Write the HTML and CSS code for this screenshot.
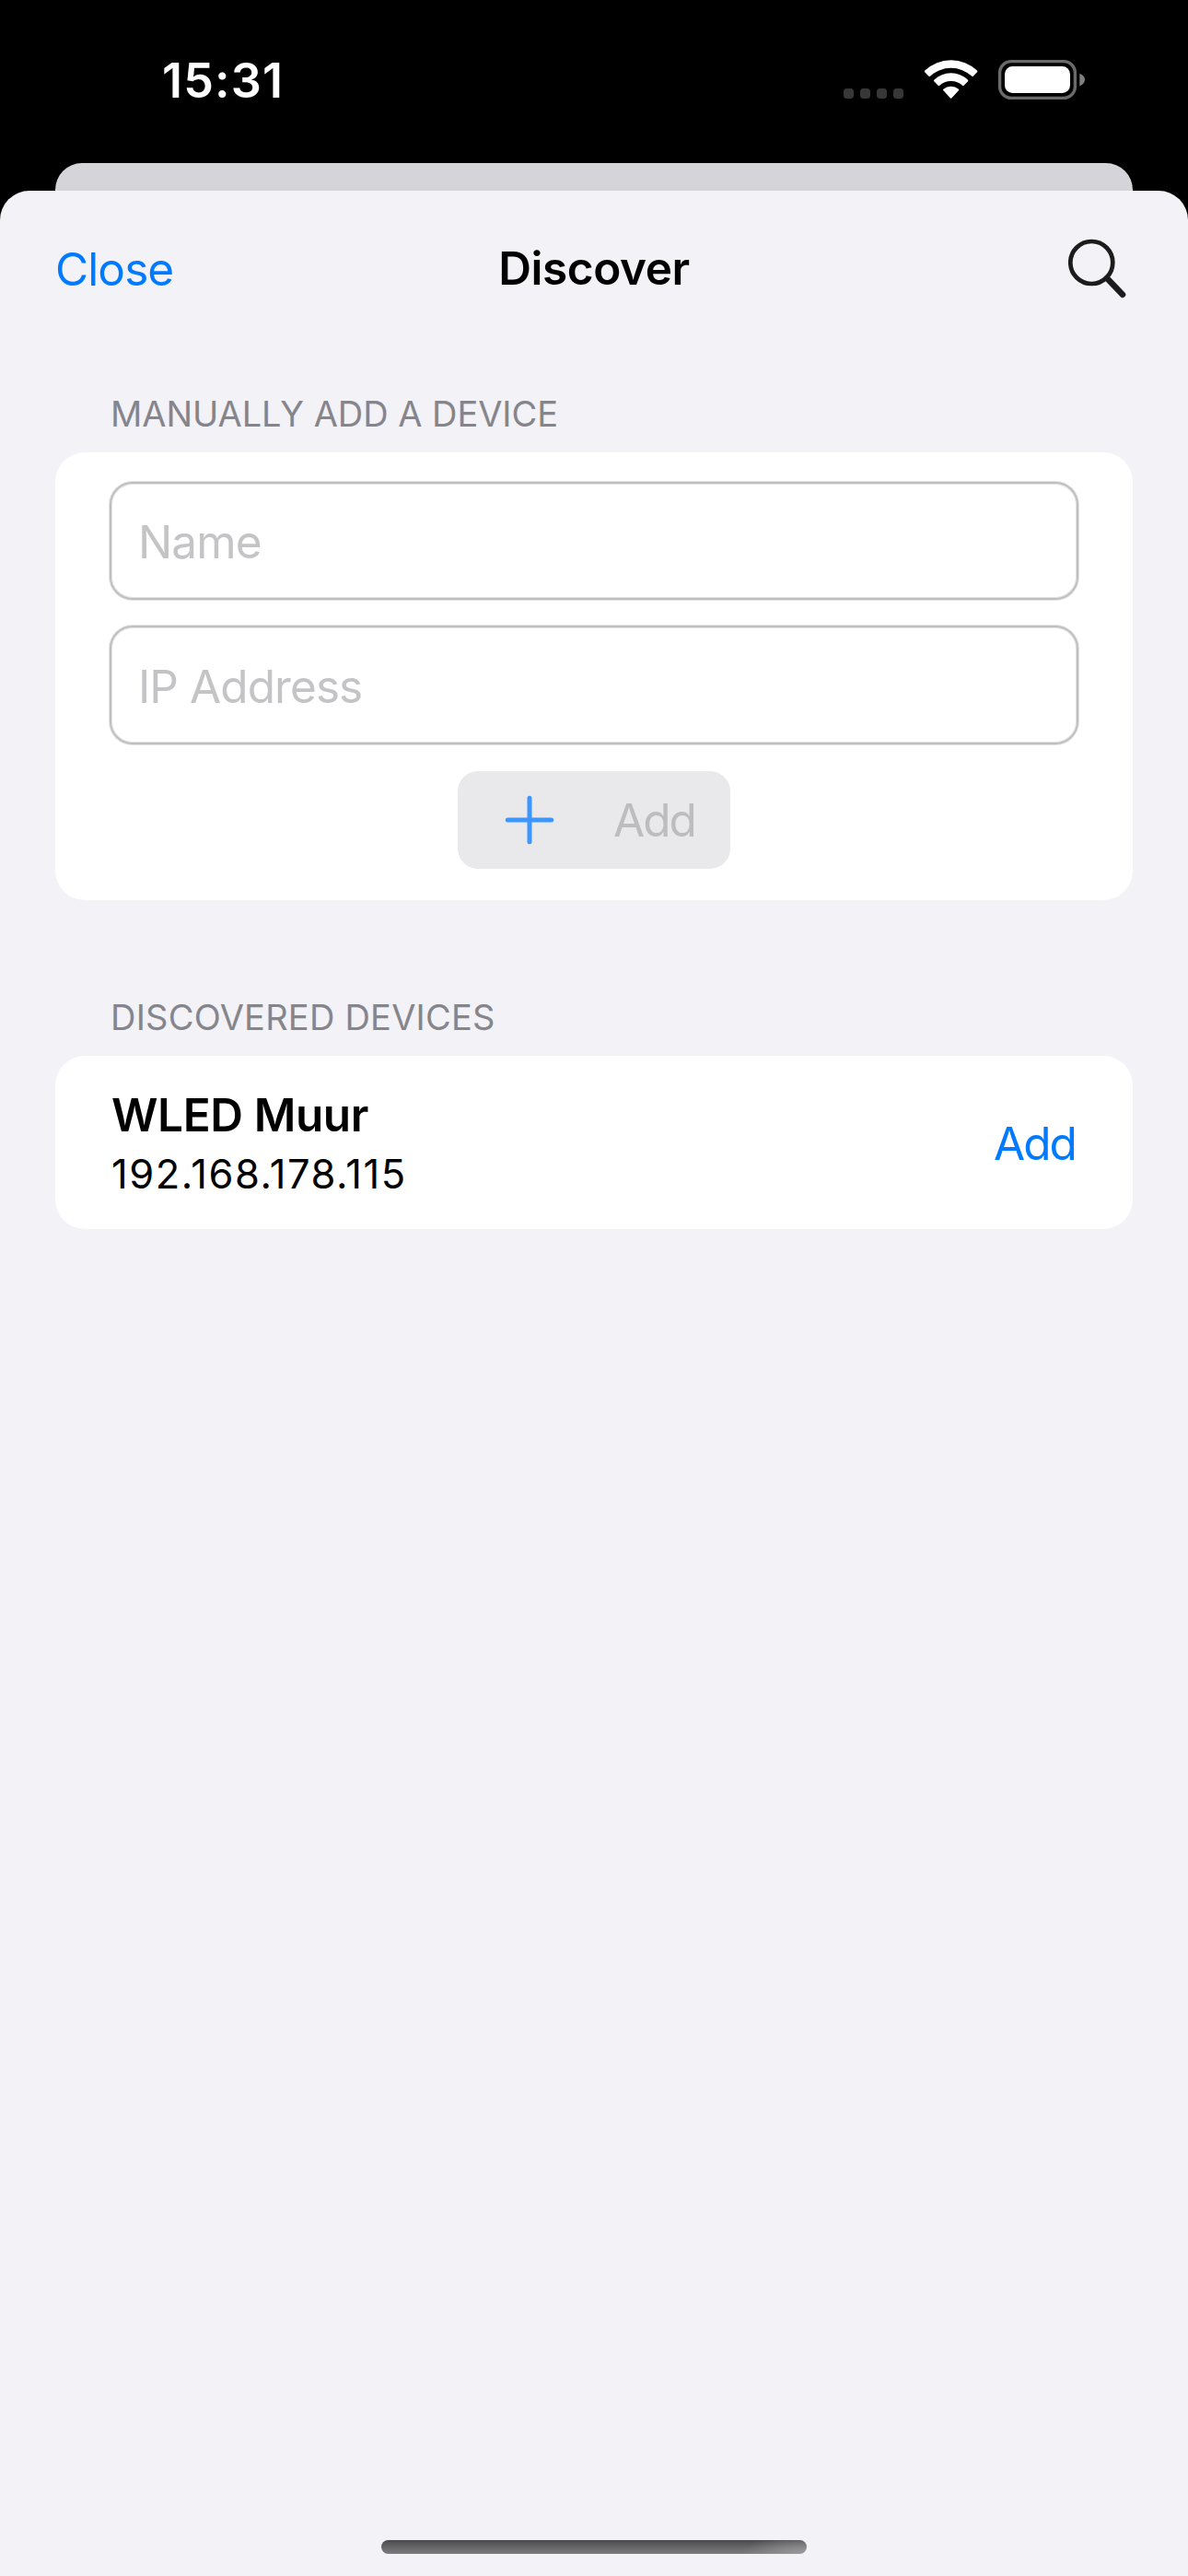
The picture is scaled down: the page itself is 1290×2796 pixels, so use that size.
FILE: index.html
```html
<!DOCTYPE html>
<html lang="en">
<head>
<meta charset="utf-8">
<title>Discover</title>
<link rel="stylesheet" href="styles.css">
</head>
<body>
<header class="status">
  <time class="clock">15:31</time>
  <svg class="indicators" width="264" height="46" viewBox="0 0 264 46" aria-hidden="true">
    <g fill="#373737"><rect x="0" y="32" width="11" height="11" rx="3.5"/><rect x="18" y="32" width="11" height="11" rx="3.5"/><rect x="36" y="32" width="11" height="11" rx="3.5"/><rect x="54" y="32" width="11" height="11" rx="3.5"/></g>
    <g fill="#fff">
      <path d="M88.200 14.300Q87.500 13.500 88.300 12.600A41 41 0 0 1 145 12.600Q145.800 13.500 145.100 14.300L140.500 18.900Q140 19.300 139.400 18.800A33.300 33.300 0 0 0 93.900 18.800Q93.300 19.300 92.800 18.900Z"/>
      <path d="M98.200 24.200Q97.500 23.500 98.300 22.700A26.500 26.500 0 0 1 135 22.700Q135.800 23.500 135.100 24.200L130.400 28.900Q129.900 29.400 129.300 28.900A18.500 18.500 0 0 0 104 28.900Q103.400 29.400 102.900 28.900Z"/>
      <path d="M108.200 34.100Q107.500 33.400 108.400 32.700A12.800 12.800 0 0 1 124.900 32.700Q125.800 33.400 125.100 34.100L117.300 42.500Q116.650 43.200 116 42.500Z"/>
    </g>
    <rect x="169.600" y="2.600" width="81.800" height="39.800" rx="12.500" fill="none" stroke="#6a6a6a" stroke-width="3.400"/>
    <rect x="175" y="8" width="71" height="29" rx="8.500" fill="#fff"/>
    <path d="M256.300 16C260.500 17.500 262 20 262 22.500S260.500 27.500 256.300 29.500Z" fill="#808080"/>
  </svg>
</header>
<div class="backdrop"></div>
<main class="sheet">
  <nav class="nav">
    <a class="close">Close</a>
    <h1 class="title">Discover</h1>
    <svg class="search" width="64" height="66" viewBox="0 0 64 66" aria-label="Search"><circle cx="25.300" cy="26" r="23" fill="none" stroke="#1c1c1c" stroke-width="4.700"/><path d="M42 43L59 60.700" fill="none" stroke="#1c1c1c" stroke-width="6.600" stroke-linecap="round"/></svg>
  </nav>
  <section class="manual">
    <h2 class="label">MANUALLY ADD A DEVICE</h2>
    <form class="card form">
      <input class="field" type="text" placeholder="Name">
      <input class="field field-ip" type="text" placeholder="IP Address">
      <button class="add-button" type="button" disabled>
        <svg width="54" height="54" viewBox="0 0 54 54" aria-hidden="true"><path d="M27 3.300V50.700M3.300 27H50.700" stroke="#3b96ff" stroke-width="5" stroke-linecap="round"/></svg>
        <span>Add</span>
      </button>
    </form>
  </section>
  <section class="found">
    <h2 class="label label-found">DISCOVERED DEVICES</h2>
    <div class="card device">
      <div class="info">
        <div class="name">WLED Muur</div>
        <div class="address">192.168.178.115</div>
      </div>
      <a class="add-link">Add</a>
    </div>
  </section>
  <div class="home"></div>
</main>
</body>
</html>
```
FILE: styles.css
```css
* { box-sizing: border-box; margin: 0; }
body { width: 1290px; height: 2796px; background: #000; font-family: Inter, "Liberation Sans", sans-serif; font-size: 49.5px; color: #000; display: flex; flex-direction: column; overflow: hidden; }

/* Status bar */
.status { height: 177px; display: flex; justify-content: space-between; align-items: flex-start; padding: 58px 110px 0 176px; }
.indicators { margin-top: 6px; }
.clock { color: #fff; font-size: 52px; font-weight: 600; line-height: 60px; letter-spacing: 1.15px; }

/* Sheet */
.backdrop { height: 30px; margin: 0 60px; background: #d5d4d9; border-radius: 29px 29px 0 0; }
.sheet { flex: 1; background: #f2f2f7; border-radius: 32px 32px 0 0; display: flex; flex-direction: column; }
.nav { height: 170px; display: grid; grid-template-columns: 1fr auto 1fr; align-items: center; padding: 0 60px; }
.close, .add-link { color: #007aff; line-height: 60px; }
.close { letter-spacing: -0.9px; }
.title { font-size: 49.5px; font-weight: 600; line-height: 60px; padding-bottom: 2px; letter-spacing: -0.45px; }
.search { justify-self: end; margin-right: 6px; }

/* Sections */
.manual, .found { padding: 0 60px; }
.manual { margin-top: 49px; }
.found { margin-top: 104px; }
.label { font-size: 38px; font-weight: 400; line-height: 46px; color: #85858b; padding: 0 60px 19px; letter-spacing: -0.05px; }
.label-found { letter-spacing: 0.22px; }
.card { background: #fff; border-radius: 32px; }

/* Manual form */
.form { height: 486px; padding: 32px 59px; display: flex; flex-direction: column; }
.field { height: 128px; padding: 2px 29px 0; border: 2px solid #bfbfbf; border-radius: 25px; box-shadow: 0 0 0 1px rgba(191,191,191,.45), inset 0 0 0 1px rgba(191,191,191,.45); font: inherit; letter-spacing: -0.92px; }
.field::placeholder { color: #c4c4c6; opacity: 1; }
.field-ip { height: 129px; margin: 28px 0 29px; }
.add-button { align-self: center; width: 296px; height: 106px; border: 0; border-radius: 22px; background: #e9e9eb; color: #bdbdbf; font: inherit; letter-spacing: -1.9px; display: flex; align-items: center; justify-content: space-between; padding: 0 38px 0 51px; }

/* Device row */
.device { height: 188px; padding: 32px 62px 28px 61px; display: flex; justify-content: space-between; align-items: center; }
.name { font-weight: 600; line-height: 64px; letter-spacing: -0.4px; }
.address { font-size: 43.5px; line-height: 64px; letter-spacing: 1.55px; }
.add-link { letter-spacing: -1.9px; padding-bottom: 2px; }

/* Home indicator */
.home { width: 462px; height: 15px; margin: auto auto 24px; border-radius: 8px; background: radial-gradient(ellipse 70px 22px at 100% 100%, rgba(165,165,167,.8), rgba(165,165,167,0)), linear-gradient(#4b4b4d, #7d7d7f); }
```
